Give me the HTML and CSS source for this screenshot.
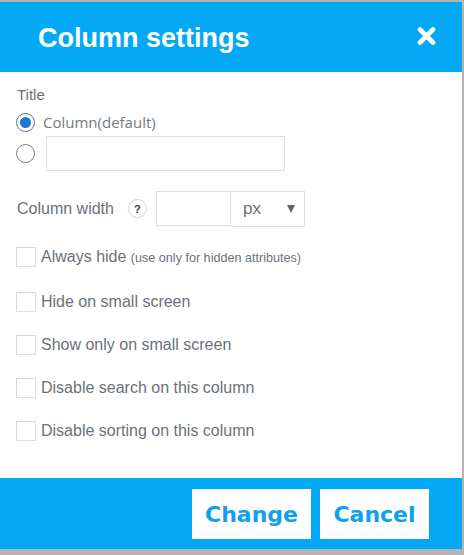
FILE: index.html
```html
<!DOCTYPE html>
<html lang="en">
   <head>
      <meta charset="UTF-8" />
      <meta name="viewport" content="width=device-width, initial-scale=1.0"/>
      <title>Column settings</title>
      <link rel="stylesheet" href="styles.css">
   </head>
   <body>
      <div class="dialog">
         <div class="dialog-header">
            <div class="dialog-title">Column settings</div>
            <button class="close-button" aria-label="Close">
               <svg width="19" height="18" viewBox="0 0 19 18">
                  <path d="M3 2.5 L16 15.5 M16 2.5 L3 15.5" stroke="#fff" stroke-width="4.6" stroke-linecap="round"/>
               </svg>
            </button>
         </div>
         <div class="dialog-body">
            <div class="field-title">Title</div>
            <label class="radio-row first">
               <input type="radio" name="title" class="radio" checked>
               <span class="radio-label">Column(default)</span>
            </label>
            <label class="radio-row">
               <input type="radio" name="title" class="radio">
               <input type="text" class="text-input title-input">
            </label>
            <div class="width-row">
               <span class="field-label">Column width</span>
               <span class="help-icon">?</span>
               <input type="text" class="text-input width-input">
               <div class="unit-select">
                  <span>px</span>
                  <span class="unit-arrow"></span>
               </div>
            </div>
            <div class="check-list">
               <label class="check-row always-hide">
                  <input type="checkbox" class="checkbox">
                  <span>Always hide <small>(use only for hidden attributes)</small></span>
               </label>
               <label class="check-row">
                  <input type="checkbox" class="checkbox">
                  <span>Hide on small screen</span>
               </label>
               <label class="check-row">
                  <input type="checkbox" class="checkbox">
                  <span>Show only on small screen</span>
               </label>
               <label class="check-row">
                  <input type="checkbox" class="checkbox">
                  <span>Disable search on this column</span>
               </label>
               <label class="check-row">
                  <input type="checkbox" class="checkbox">
                  <span>Disable sorting on this column</span>
               </label>
            </div>
         </div>
         <div class="dialog-footer">
            <button class="footer-button change-button">Change</button>
            <button class="footer-button cancel-button">Cancel</button>
         </div>
      </div>
   </body>
</html>
```

FILE: styles.css
```css
body {
margin: 0;
padding-top: 2px;
background-color: #b3b3b3;
font-family: "Liberation Sans", Arial, sans-serif;
color: #6b7179;
}
.dialog {
width: 462px;
background-color: #fff;
}
.dialog-header {
height: 70px;
background-color: #03a9f4;
display: flex;
align-items: center;
justify-content: space-between;
padding: 0 26px 0 38px;
box-sizing: border-box;
}
.dialog-title {
color: #fff;
font-size: 27px;
font-weight: bold;
margin-top: 2px;
}
.close-button {
background: none;
border: none;
padding: 0;
display: flex;
cursor: pointer;
margin-top: -2px;
}
.dialog-body {
padding: 13px 16px 37px 16px;
}
.field-title {
font-size: 15px;
line-height: 20px;
padding-left: 1px;
}
.radio-row {
display: flex;
align-items: center;
gap: 8px;
margin-top: 4px;
}
.radio-row.first {
margin-top: 8px;
}
.radio {
appearance: none;
width: 19px;
height: 19px;
margin: 0;
border: 1px solid #7b7f85;
border-radius: 50%;
box-sizing: border-box;
display: flex;
align-items: center;
justify-content: center;
}
.radio:checked {
border-color: #5f7896;
}
.radio:checked::after {
content: "";
width: 11px;
height: 11px;
border-radius: 50%;
background-color: #1f75d0;
}
.radio-label {
font-family: "Open Sans", sans-serif;
font-size: 15px;
line-height: 19px;
color: #777b80;
}
.text-input {
height: 35px;
border: 1px solid #e0e0e0;
box-sizing: border-box;
margin: 0;
padding: 0 8px;
font-family: inherit;
}
.title-input {
width: 239px;
margin-left: 3px;
}
.width-row {
display: flex;
align-items: center;
margin-top: 19px;
}
.field-label {
font-size: 16px;
padding-left: 1px;
}
.help-icon {
width: 19px;
height: 19px;
box-sizing: border-box;
border: 1px solid #d6d6d6;
border-radius: 50%;
display: flex;
align-items: center;
justify-content: center;
font-size: 11px;
font-weight: bold;
color: #444;
margin-left: 14px;
}
.width-input {
width: 75px;
margin-left: 9px;
}
.unit-select {
width: 74px;
height: 36px;
border: 1px solid #e0e0e0;
border-left: none;
box-sizing: border-box;
display: flex;
align-items: center;
justify-content: space-between;
padding: 0 9px 0 12px;
font-size: 17px;
margin-top: 1px;
}
.unit-arrow {
width: 0;
height: 0;
border-left: 4px solid transparent;
border-right: 4px solid transparent;
border-top: 8px solid #5e6870;
}
.check-list {
display: flex;
flex-direction: column;
gap: 23px;
margin-top: 20px;
}
.check-row {
display: flex;
align-items: center;
gap: 5px;
font-size: 16px;
height: 20px;
}
.check-row.always-hide {
margin-bottom: 2px;
}
.check-row small {
font-size: 12.6px;
}
.checkbox {
appearance: none;
width: 20px;
height: 20px;
margin: 0;
border: 1px solid #e0e0e0;
border-top-color: #d6d6d6;
border-left-color: #d6d6d6;
box-sizing: border-box;
}
.dialog-footer {
height: 71px;
background-color: #03a9f4;
display: flex;
justify-content: flex-end;
gap: 9px;
padding: 11px 33px 10px 0;
box-sizing: border-box;
}
.footer-button {
height: 50px;
background-color: #fff;
border: none;
color: #10a0ec;
font-family: "DejaVu Sans", Verdana, sans-serif;
font-weight: bold;
font-size: 22px;
padding: 0;
cursor: pointer;
}
.change-button {
width: 119px;
}
.cancel-button {
width: 109px;
}
```
